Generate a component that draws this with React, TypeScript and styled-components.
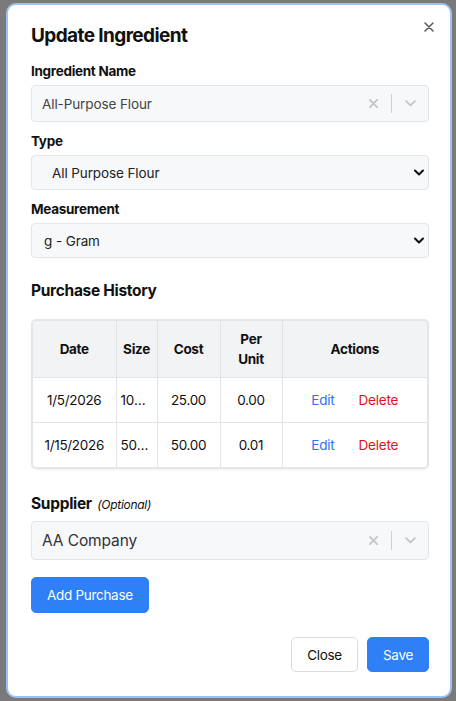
import React from 'react'
import styled, { createGlobalStyle } from 'styled-components'

const GlobalStyle = createGlobalStyle`
  * { box-sizing: border-box; }
  html, body {
    margin: 0;
    padding: 0;
    background: #7a7a7a;
    font-family: Inter, "Noto Sans", sans-serif;
    color: #111;
  }
`

const Backdrop = styled.div`
  width: 456px;
  height: 701px;
  padding: 3px 4px 3px 6px;
  background: #7a7a7a;
`

const Modal = styled.div`
  width: 446px;
  height: 695px;
  background: #fff;
  border: 2px solid #9fc0f5;
  border-radius: 10px;
  padding: 19px 21px 0 23px;
  display: flex;
  flex-direction: column;
`

const Header = styled.div`
  display: flex;
  justify-content: space-between;
  align-items: flex-start;
`

const Title = styled.h2`
  margin: 0;
  font-size: 19px;
  line-height: 24px;
  font-weight: 700;
  letter-spacing: -0.6px;
`

const CloseIcon = styled.button`
  width: 20px;
  height: 20px;
  margin: -7px -10px 0 0;
  padding: 0;
  border: 0;
  background: none;
  display: flex;
  align-items: center;
  justify-content: center;
  color: #555;
`

const Label = styled.div<{ $gap?: number }>`
  margin-top: ${p => p.$gap ?? 9}px;
  margin-bottom: 4px;
  font-size: 13.5px;
  line-height: 20px;
  font-weight: 700;
  letter-spacing: -0.3px;
`

const BigLabel = styled.div`
  margin-top: 24px;
  margin-bottom: 5px;
  font-size: 15.5px;
  line-height: 22px;
  font-weight: 700;
  letter-spacing: -0.3px;

  em {
    font-size: 12px;
    font-weight: 400;
    margin-left: 2px;
  }
`

const SectionTitle = styled.h3`
  margin: 22px 0 17px;
  font-size: 15.5px;
  line-height: 22px;
  font-weight: 700;
  letter-spacing: -0.3px;
`

const ComboBox = styled.div<{ $height: number }>`
  display: flex;
  align-items: center;
  height: ${p => p.$height}px;
  background: #f7f8fa;
  border: 1px solid #e3e5e9;
  border-radius: 4px;
  padding-left: 10px;
`

const ComboValue = styled.div<{ $size: number }>`
  flex: 1;
  font-size: ${p => p.$size}px;
  color: ${p => (p.$size > 14 ? '#333' : '#444')};
  letter-spacing: -0.1px;
`

const ComboIndicators = styled.div`
  display: flex;
  align-items: center;
  color: #c4c4c4;
`

const Indicator = styled.span`
  display: flex;
  align-items: center;
  justify-content: center;
  width: 36px;
  height: 20px;
`

const Separator = styled.span`
  width: 1px;
  height: 19px;
  background: #d0d0d0;
`

const SelectWrap = styled.div`
  position: relative;
  height: 35px;
`

const Select = styled.select<{ $indent: number }>`
  appearance: none;
  width: 100%;
  height: 35px;
  background: #f7f8fa;
  border: 1px solid #e3e5e9;
  border-radius: 4px;
  padding: 0 30px 0 ${p => p.$indent}px;
  font-family: inherit;
  font-size: 13.5px;
  color: #222;
  letter-spacing: -0.1px;
`

const SelectChevron = styled.svg`
  position: absolute;
  right: 5px;
  top: 14px;
  pointer-events: none;
`

const TableBox = styled.div`
  border: 2px solid #e4e5e7;
  border-radius: 5px;
  overflow: hidden;
  box-shadow: 0 1px 2px rgba(0, 0, 0, 0.06);
`

const Table = styled.table`
  width: 100%;
  border-collapse: collapse;
  table-layout: fixed;
  font-size: 13.5px;
  letter-spacing: -0.3px;
`

const Th = styled.th`
  background: #f2f3f5;
  font-weight: 700;
  line-height: 20px;
  padding: 8px 4px;
  border-right: 1px solid #e2e3e5;
  border-bottom: 1px solid #e2e3e5;
  text-align: center;
  &:last-child { border-right: 0; }
`

const Td = styled.td`
  line-height: 20px;
  padding: 12px 4px;
  border-right: 1px solid #e2e3e5;
  border-bottom: 1px solid #e2e3e5;
  text-align: center;
  white-space: nowrap;
  overflow: hidden;
  text-overflow: ellipsis;
  tr:last-child > & { border-bottom: 0; }
  &:last-child { border-right: 0; }
`

const LinkButton = styled.button<{ $danger?: boolean }>`
  border: 0;
  background: none;
  padding: 0 12px;
  font-family: inherit;
  font-size: 13.5px;
  letter-spacing: -0.2px;
  color: ${p => (p.$danger ? '#e3101c' : '#2d6ff5')};
`

const Button = styled.button<{ $primary?: boolean }>`
  height: 36px;
  padding: 0 15px;
  border-radius: 5px;
  font-family: inherit;
  font-size: 13.5px;
  letter-spacing: -0.3px;
  border: 1px solid ${p => (p.$primary ? '#2f80f7' : '#dcdcdc')};
  background: ${p => (p.$primary ? '#2f80f7' : '#fff')};
  color: ${p => (p.$primary ? '#fff' : '#111')};
`

const AddRow = styled.div`
  margin-top: 17px;
`

const Footer = styled.div`
  display: flex;
  justify-content: flex-end;
  gap: 9px;
  margin-top: 24px;

  & > button { height: 35px; }
`

const Chevron = ({ color = 'currentColor', w = 10, sw = 1.8 }: { color?: string; w?: number; sw?: number }) => (
  <svg width={w} height={w * 0.6} viewBox="0 0 10 6" fill="none">
    <path d="M1 1l4 4 4-4" stroke={color} strokeWidth={sw} strokeLinecap="round" strokeLinejoin="round" />
  </svg>
)

const Cross = ({ size = 9, color = 'currentColor', sw = 1.8 }: { size?: number; color?: string; sw?: number }) => (
  <svg width={size} height={size} viewBox="0 0 10 10" fill="none">
    <path d="M1 1l8 8M9 1l-8 8" stroke={color} strokeWidth={sw} strokeLinecap="round" />
  </svg>
)

function Combo({ value, height, size }: { value: string; height: number; size: number }) {
  return (
    <ComboBox $height={height}>
      <ComboValue $size={size}>{value}</ComboValue>
      <ComboIndicators>
        <Indicator>
          <Cross size={9} sw={2} />
        </Indicator>
        <Separator />
        <Indicator>
          <Chevron w={11} sw={1.6} />
        </Indicator>
      </ComboIndicators>
    </ComboBox>
  )
}

function NativeSelect({ value, indent }: { value: string; indent: number }) {
  return (
    <SelectWrap>
      <Select $indent={indent} defaultValue={value}>
        <option>{value}</option>
      </Select>
      <SelectChevron width="10" height="7" viewBox="0 0 10 6" fill="none">
        <path d="M1 1l4 4 4-4" stroke="#111" strokeWidth="2" strokeLinecap="round" strokeLinejoin="round" />
      </SelectChevron>
    </SelectWrap>
  )
}

const purchases = [
  { date: '1/5/2026', size: '1000.00', cost: '25.00', unit: '0.00' },
  { date: '1/15/2026', size: '5000.00', cost: '50.00', unit: '0.01' },
]

export default function App() {
  return (
    <Backdrop>
      <GlobalStyle />
      <Modal>
        <Header>
          <Title>Update Ingredient</Title>
          <CloseIcon aria-label="Close">
            <Cross size={10} sw={1.5} color="#555" />
          </CloseIcon>
        </Header>

        <Label $gap={13}>Ingredient Name</Label>
        <Combo value="All-Purpose Flour" height={37} size={13.5} />

        <Label>Type</Label>
        <NativeSelect value="All Purpose Flour" indent={20} />

        <Label>Measurement</Label>
        <NativeSelect value="g - Gram" indent={12} />

        <SectionTitle>Purchase History</SectionTitle>
        <TableBox>
          <Table>
            <colgroup>
              <col style={{ width: 83 }} />
              <col style={{ width: 41 }} />
              <col style={{ width: 63 }} />
              <col style={{ width: 62 }} />
              <col />
            </colgroup>
            <thead>
              <tr>
                <Th>Date</Th>
                <Th>Size</Th>
                <Th>Cost</Th>
                <Th>
                  Per
                  <br />
                  Unit
                </Th>
                <Th>Actions</Th>
              </tr>
            </thead>
            <tbody>
              {purchases.map(p => (
                <tr key={p.date}>
                  <Td>{p.date}</Td>
                  <Td>{p.size}</Td>
                  <Td>{p.cost}</Td>
                  <Td>{p.unit}</Td>
                  <Td>
                    <LinkButton>Edit</LinkButton>
                    <LinkButton $danger>Delete</LinkButton>
                  </Td>
                </tr>
              ))}
            </tbody>
          </Table>
        </TableBox>

        <BigLabel>
          Supplier <em>(Optional)</em>
        </BigLabel>
        <Combo value="AA Company" height={39} size={15.5} />

        <AddRow>
          <Button $primary>Add Purchase</Button>
        </AddRow>

        <Footer>
          <Button>Close</Button>
          <Button $primary>Save</Button>
        </Footer>
      </Modal>
    </Backdrop>
  )
}
